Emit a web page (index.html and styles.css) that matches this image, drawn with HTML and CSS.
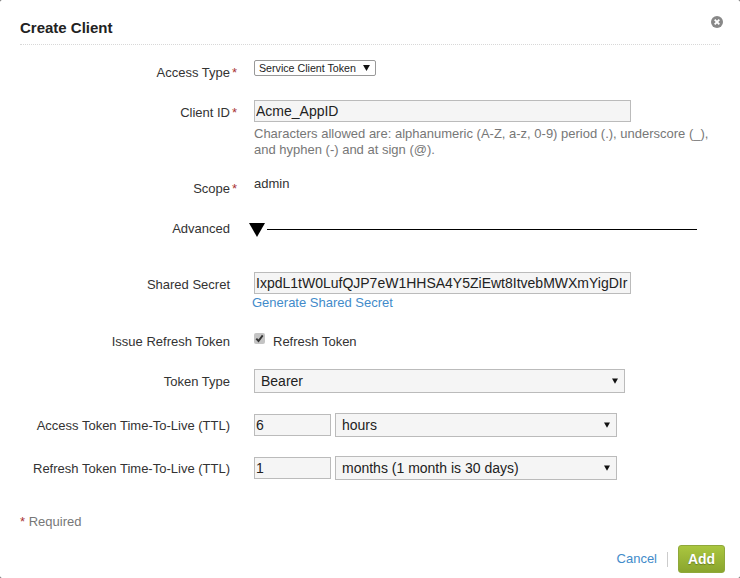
FILE: index.html
```html
<!DOCTYPE html>
<html lang="en">
<head>
<meta charset="utf-8">
<title>Create Client</title>
<link rel="stylesheet" href="styles.css">
</head>
<body>
<div class="modal">
  <header class="modal-header">
    <h1 class="modal-title">Create Client</h1>
    <svg class="close-icon" viewBox="0 0 12 12" aria-label="Close">
      <circle cx="6" cy="6" r="6" fill="#888"/>
      <path d="M3.7 3.7l4.6 4.6M8.3 3.7l-4.6 4.6" stroke="#fff" stroke-width="1.9" fill="none"/>
    </svg>
  </header>
  <form class="form">
    <div class="row row-access">
      <label class="label label-access">Access Type</label><span class="star star-access">*</span>
      <div class="select-wrap select-small">
        <select class="select"><option>Service Client Token</option></select>
        <svg class="arrow arrow-small" viewBox="0 0 8 7"><path d="M0 0h8L4 7z" fill="#111"/></svg>
      </div>
    </div>
    <div class="row row-client">
      <label class="label label-client">Client ID</label><span class="star star-client">*</span>
      <div class="control">
        <input class="input input-wide" value="Acme_AppID">
        <p class="help">Characters allowed are: alphanumeric (A-Z, a-z, 0-9) period (.), underscore (_),<br>and hyphen (-) and at sign (@).</p>
      </div>
    </div>
    <div class="row row-scope">
      <label class="label label-scope">Scope</label><span class="star star-scope">*</span>
      <div class="value">admin</div>
    </div>
    <div class="row row-advanced">
      <label class="label label-advanced">Advanced</label>
      <div class="advanced">
        <svg class="advanced-arrow" viewBox="0 0 16 14"><path d="M0 0h16L8 14z" fill="#000"/></svg>
        <div class="advanced-line"></div>
      </div>
    </div>
    <div class="row row-secret">
      <label class="label label-secret">Shared Secret</label>
      <div class="control">
        <input class="input input-wide" value="IxpdL1tW0LufQJP7eW1HHSA4Y5ZiEwt8ItvebMWXmYigDIr">
        <a class="link generate" href="#">Generate Shared Secret</a>
      </div>
    </div>
    <div class="row row-refresh">
      <label class="label label-refresh">Issue Refresh Token</label>
      <div class="check-line">
        <svg class="check" viewBox="0 0 11 11">
          <rect x="0" y="0" width="11" height="11" rx="2" fill="#c4c4c4"/>
          <path d="M2.3 5.6l2.2 2.4 4.2-5.6" stroke="#333" stroke-width="1.9" fill="none"/>
        </svg>
        <span class="check-text">Refresh Token</span>
      </div>
    </div>
    <div class="row row-type">
      <label class="label label-type">Token Type</label>
      <div class="select-wrap select-type">
        <select class="select"><option>Bearer</option></select>
        <svg class="arrow" viewBox="0 0 8 7"><path d="M0 0h8L4 7z" fill="#111"/></svg>
      </div>
    </div>
    <div class="row row-ttl1">
      <label class="label label-ttl">Access Token Time-To-Live (TTL)</label>
      <div class="ttl">
        <input class="input input-ttl" value="6">
        <div class="select-wrap select-unit">
          <select class="select"><option>hours</option></select>
          <svg class="arrow" viewBox="0 0 8 7"><path d="M0 0h8L4 7z" fill="#111"/></svg>
        </div>
      </div>
    </div>
    <div class="row row-ttl2">
      <label class="label label-ttl">Refresh Token Time-To-Live (TTL)</label>
      <div class="ttl">
        <input class="input input-ttl" value="1">
        <div class="select-wrap select-unit">
          <select class="select"><option>months (1 month is 30 days)</option></select>
          <svg class="arrow" viewBox="0 0 8 7"><path d="M0 0h8L4 7z" fill="#111"/></svg>
        </div>
      </div>
    </div>
    <p class="required"><span class="required-star">*</span> Required</p>
    <footer class="footer">
      <a class="link cancel" href="#">Cancel</a>
      <span class="divider"></span>
      <button class="add" type="button">Add</button>
    </footer>
  </form>
</div>
</body>
</html>
```
FILE: styles.css
```css
* { box-sizing: border-box; }
html, body { margin: 0; height: 100%; background: #555; }
body { font-family: "Liberation Sans", Arial, sans-serif; font-size: 13px; color: #333; overflow: hidden; }
.modal { width: 740px; height: 578px; background: #fff; border-radius: 2px; padding: 0 20px; }
.modal-header { height: 45px; border-bottom: 1px dotted #d8d8d8; display: flex; justify-content: space-between; padding-top: 19px; }
.modal-title { margin: 0; font-size: 15px; line-height: 18px; font-weight: bold; color: #222; }
.close-icon { width: 12px; height: 12px; margin: -3px -3px 0 0; }
.form { display: block; }
.row { display: grid; grid-template-columns: 210px 24px 1fr; }
.row > :last-child { grid-column: 3; }
.label { text-align: right; line-height: 16px; color: #333; font-size: 13px; grid-column: 1; }
.star { color: #a33; font-size: 13px; line-height: 16px; padding-left: 2px; }
.select-wrap { position: relative; }
.select { appearance: none; -webkit-appearance: none; display: block; width: 100%; height: 100%; margin: 0; border: 1px solid #bbb; border-radius: 0; background: #f5f5f5; font: 14px "Liberation Sans", Arial, sans-serif; color: #222; padding: 0 0 0 6px; outline: 0; }
.arrow { position: absolute; right: 7px; top: 9px; width: 6px; height: 6px; }
.input { display: block; height: 22px; margin: 0; border: 1px solid #bbb; border-radius: 0; background: #f5f5f5; font: 14px "Liberation Sans", Arial, sans-serif; color: #222; padding: 0 1px; outline: 0; }
.input-wide { width: 377px; }
.input-ttl { width: 77px; }
.row-access { margin-top: 15px; height: 16px; }
.label-access, .star-access { margin-top: 5px; }
.select-small { width: 122px; height: 16px; }
.select-small .select { background: #fff; font-size: 10.67px; padding-left: 4px; border-radius: 2px; border-color: #999; }
.arrow-small { right: 6px; top: 5px; width: 7px; height: 6px; }
.row-client { margin-top: 24px; }
.label-client, .star-client { margin-top: 5px; }
.help { margin: 4px 0 0; color: #777; font-size: 13px; line-height: 16px; }
.row-scope { margin-top: 17px; }
.label-scope, .star-scope { margin-top: 6px; }
.value { font-size: 13px; line-height: 16px; margin-top: 1px; }
.row-advanced { margin-top: 23px; height: 17px; }
.label-advanced { margin-top: 1px; }
.advanced { display: flex; align-items: flex-start; margin-left: -5px; }
.advanced-arrow { width: 16px; height: 14px; margin-top: 3px; flex: none; }
.advanced-line { width: 430px; height: 1px; background: #000; margin: 9px 0 0 2px; }
.row-secret { margin-top: 35px; }
.label-secret { margin-top: 5px; }
.link { color: #428bca; text-decoration: none; }
.generate { display: block; margin: 1px 0 0 -2px; font-size: 13px; line-height: 16px; }
.row-refresh { margin-top: 22px; height: 16px; }
.label-refresh { margin-top: 1px; }
.check-line { display: flex; align-items: flex-start; }
.check { width: 11px; height: 11px; margin-top: 0; }
.check-text { margin-left: 8px; line-height: 16px; font-size: 13px; margin-top: 1px; }
.row-type { margin-top: 20px; }
.label-type { margin-top: 5px; }
.select-type { width: 371px; height: 24px; }
.row-ttl1 { margin-top: 20px; }
.row-ttl2 { margin-top: 19px; }
.label-ttl { margin-top: 5px; white-space: nowrap; }
.ttl { display: flex; align-items: center; gap: 4px; }
.select-unit { width: 282px; height: 24px; }
.required { margin: 34px 0 0; color: #777; font-size: 13px; line-height: 16px; }
.required-star { color: #a33; }
.footer { display: flex; justify-content: flex-end; align-items: center; margin: 15px -5px 0 0; }
.cancel { font-size: 13px; line-height: 16px; }
.divider { width: 1px; height: 15px; background: #ccc; margin: 0 10px; }
.add { width: 47px; height: 28px; border: 1px solid #8fa83a; border-radius: 3px; background: linear-gradient(#aac63f, #8aa52e); color: #fff; font: bold 14px "Liberation Sans", Arial, sans-serif; text-shadow: 0 1px 1px #6a8020; padding: 0; }
```
